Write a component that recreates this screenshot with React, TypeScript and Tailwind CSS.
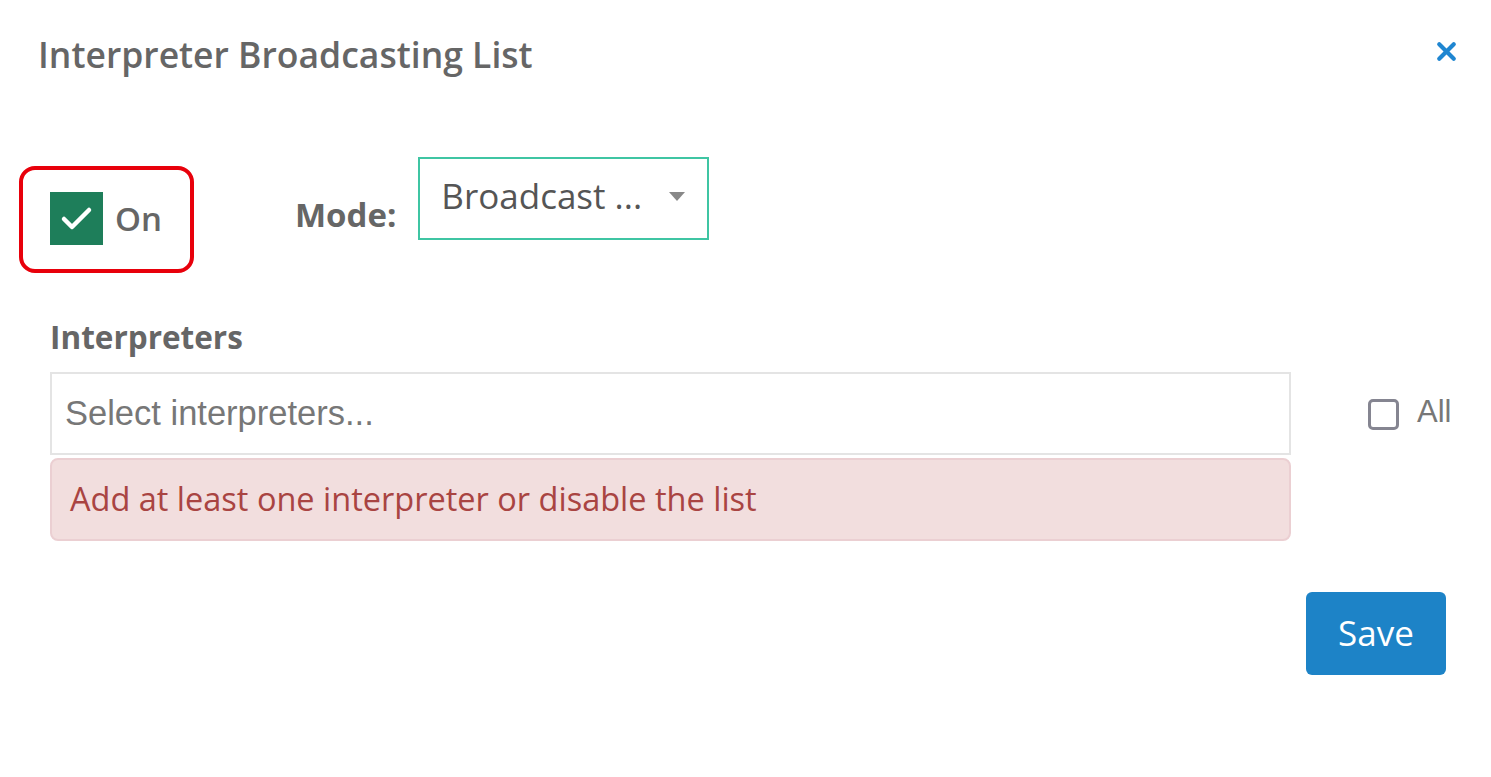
import { X } from "lucide-react";

export default function App() {
  return (
    <div className="relative h-[777px] w-[1491px] overflow-hidden bg-white font-['Open_Sans',sans-serif] text-[#666]">
      {/* header */}
      <div className="flex items-start justify-between pl-[38px] pr-[30px] pt-[30px]">
        <h1 className="text-[35.5px] font-semibold leading-[48px] text-[#666]">
          Interpreter Broadcasting List
        </h1>
        <button className="mt-[7px] text-[#1f86d1]">
          <X size={29} strokeWidth={3.5} />
        </button>
      </div>

      {/* toggle + mode */}
      <div className="mt-[79px] flex items-start pl-[50px]">
        <div className="relative mt-[35px] flex items-center gap-[12px]">
          <div className="pointer-events-none absolute -bottom-[28px] -left-[31px] -right-[32px] -top-[26px] rounded-[16px] border-[4px] border-[#e8000b]" />
          <span className="flex h-[53px] w-[53px] items-center justify-center bg-[#1e7e5a] text-white">
            <svg width="53" height="53" viewBox="0 0 53 53" fill="none">
              <polyline
                points="14,27 22,35 39,18"
                stroke="white"
                strokeWidth="4.5"
                strokeLinecap="round"
                strokeLinejoin="round"
              />
            </svg>
          </span>
          <span className="text-[33px] font-semibold leading-[40px]">On</span>
        </div>

        <span className="ml-[133px] mt-[38px] text-[33px] font-bold leading-[40px]">
          Mode:
        </span>

        <div className="ml-[22px] flex h-[83px] w-[291px] items-center justify-between border-2 border-[#3fc5a3] pl-[21px] pr-[22px]">
          <span className="mb-[6px] text-[35px] leading-[40px] text-[#555]">Broadcast ...</span>
          <span className="mb-[4px] h-0 w-0 border-l-[8px] border-r-[8px] border-t-[9px] border-l-transparent border-r-transparent border-t-[#888]" />
        </div>
      </div>

      {/* interpreters */}
      <div className="mt-[72px] pl-[50px]">
        <div className="text-[31.5px] font-bold leading-[40px]">Interpreters</div>
        <div className="mt-[15px] flex items-start">
          <div className="w-[1241px]">
            <div className="flex h-[83px] items-center border-2 border-[#e4e4e4] pl-[13px] font-['Liberation_Sans',Arial,sans-serif] text-[34.5px] text-[#777]">
              Select interpreters...
            </div>
            <div className="mt-[3px] flex h-[83px] items-center rounded-[8px] border-2 border-[#ebcfd2] bg-[#f2dede] pl-[18px] text-[32.5px] text-[#a94442]">
              Add at least one interpreter or disable the list
            </div>
          </div>
          <label className="ml-[77px] mt-[22px] flex items-center gap-[18px] font-['Liberation_Sans',Arial,sans-serif] text-[31px] text-[#777]">
            <span className="h-[31px] w-[31px] rounded-[5px] border-[3px] border-[#858591] bg-white" />
            <span className="-mt-[5px]">All</span>
          </label>
        </div>
      </div>

      {/* footer */}
      <div className="mt-[51px] flex justify-end pr-[45px]">
        <button className="h-[83px] w-[140px] rounded-[6px] bg-[#1d83c7] text-[35px] text-white">
          Save
        </button>
      </div>
    </div>
  );
}
